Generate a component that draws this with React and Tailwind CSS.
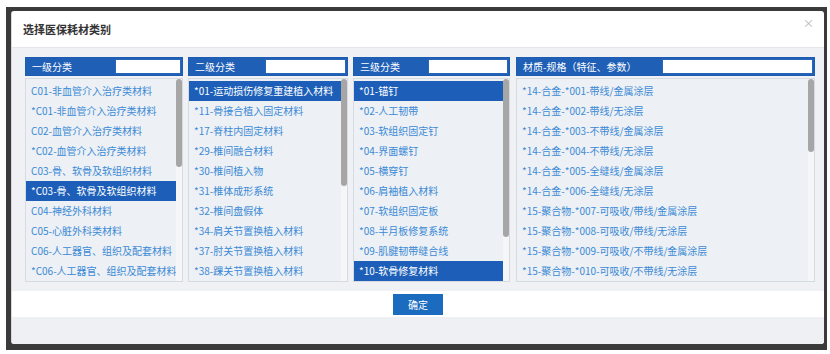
import React from "react";

const font = { fontFamily: '"Noto Sans CJK SC", "Noto Sans", sans-serif' };

const cols = [
  {
    title: "一级分类",
    w: "w-[158px]",
    inputW: "w-[66px]",
    thumb: "h-[88px]",
    items: [
      "C01-非血管介入治疗类材料",
      "*C01-非血管介入治疗类材料",
      "C02-血管介入治疗类材料",
      "*C02-血管介入治疗类材料",
      "C03-骨、软骨及软组织材料",
      "*C03-骨、软骨及软组织材料",
      "C04-神经外科材料",
      "C05-心脏外科类材料",
      "C06-人工器官、组织及配套材料",
      "*C06-人工器官、组织及配套材料",
    ],
    sel: [5],
  },
  {
    title: "二级分类",
    w: "w-[160px]",
    inputW: "w-[81px]",
    thumb: "h-[107px]",
    items: [
      "*01-运动损伤修复重建植入材料",
      "*11-骨接合植入固定材料",
      "*17-脊柱内固定材料",
      "*29-椎间融合材料",
      "*30-椎间植入物",
      "*31-椎体成形系统",
      "*32-椎间盘假体",
      "*34-肩关节置换植入材料",
      "*37-肘关节置换植入材料",
      "*38-踝关节置换植入材料",
    ],
    sel: [0],
  },
  {
    title: "三级分类",
    w: "w-[157px]",
    inputW: "w-[80px]",
    thumb: "h-[158px]",
    items: [
      "*01-锚钉",
      "*02-人工韧带",
      "*03-软组织固定钉",
      "*04-界面螺钉",
      "*05-横穿钉",
      "*06-肩袖植入材料",
      "*07-软组织固定板",
      "*08-半月板修复系统",
      "*09-肌腱韧带缝合线",
      "*10-软骨修复材料",
    ],
    sel: [0, 9],
  },
  {
    title: "材质-规格（特征、参数）",
    w: "w-[299px]",
    inputW: "w-[151px]",
    thumb: "h-[73px]",
    items: [
      "*14-合金-*001-带线/金属涂层",
      "*14-合金-*002-带线/无涂层",
      "*14-合金-*003-不带线/金属涂层",
      "*14-合金-*004-不带线/无涂层",
      "*14-合金-*005-全缝线/金属涂层",
      "*14-合金-*006-全缝线/无涂层",
      "*15-聚合物-*007-可吸收/带线/金属涂层",
      "*15-聚合物-*008-可吸收/带线/无涂层",
      "*15-聚合物-*009-可吸收/不带线/金属涂层",
      "*15-聚合物-*010-可吸收/不带线/无涂层",
    ],
    sel: [],
  },
];

function Column({ c }) {
  return (
    <div className={`${c.w} flex flex-col shrink-0`}>
      <div className="h-[19px] flex border border-[#1d5cb0] bg-[#1f60b6]">
        <div className="flex-1 pl-[6px] text-[10px] leading-[17px] text-white whitespace-nowrap overflow-hidden">
          {c.title}
        </div>
        <div className={`${c.inputW} h-[15px] mt-[1px] mr-[1px] bg-white border border-[#2a66b8]`} />
      </div>
      <div className="mt-[2px] h-[204px] flex border border-[#d6dbe2] bg-[#edf0f4]">
        <div className="flex-1 min-w-0 pt-[2px] overflow-hidden">
          {c.items.map((t, i) => {
            const s = c.sel.includes(i);
            return (
              <div
                key={i}
                className={`h-[20px] pl-[5px] text-[10px] leading-[20px] whitespace-nowrap overflow-hidden ${
                  s ? "bg-[#1d5fb8] text-white" : "text-[#3b8ad6]"
                }`}
              >
                {t}
              </div>
            );
          })}
        </div>
        <div className="w-[6px] bg-[#f5f6f7] flex flex-col">
          <div className={`${c.thumb} w-[6px] rounded-[3px] bg-[#a6a6a6]`} />
        </div>
      </div>
    </div>
  );
}

export default function App() {
  return (
    <div className="w-[830px] h-[354px] bg-white overflow-hidden" style={font}>
      <div className="ml-[6px] mt-[7px] w-[821px] h-[343px] bg-[#3a3a3a] pl-[5px] pt-[4px] pr-[3px] pb-[6px]">
        <div className="w-[813px] h-[333px] bg-white rounded-[3px] flex flex-col overflow-hidden border-l border-[#d8d8d8]">
          <div className="h-[37px] shrink-0 flex items-center justify-between border-b border-[#e3e6ea] pl-[11px] pr-[10px]">
            <div className="text-[11px] font-bold text-[#333] tracking-[0px]">选择医保耗材类别</div>
            <div className="text-[11px] text-[#b5b5b5] -mt-[12px]">×</div>
          </div>
          <div className="h-[243px] shrink-0 bg-[#eff1f5] pt-[9px] pl-[13px] pr-[9px] flex">
            <Column c={cols[0]} />
            <div className="w-[5px] shrink-0" />
            <Column c={cols[1]} />
            <div className="w-[5px] shrink-0" />
            <Column c={cols[2]} />
            <div className="w-[6px] shrink-0" />
            <Column c={cols[3]} />
          </div>
          <div className="h-[26px] shrink-0 bg-white flex items-center justify-center">
            <div className="w-[50px] h-[21px] bg-[#1b6cbf] text-white text-[10px] leading-[21px] text-center">
              确定
            </div>
          </div>
          <div className="flex-1 bg-[#eef0f4]" />
        </div>
      </div>
    </div>
  );
}
